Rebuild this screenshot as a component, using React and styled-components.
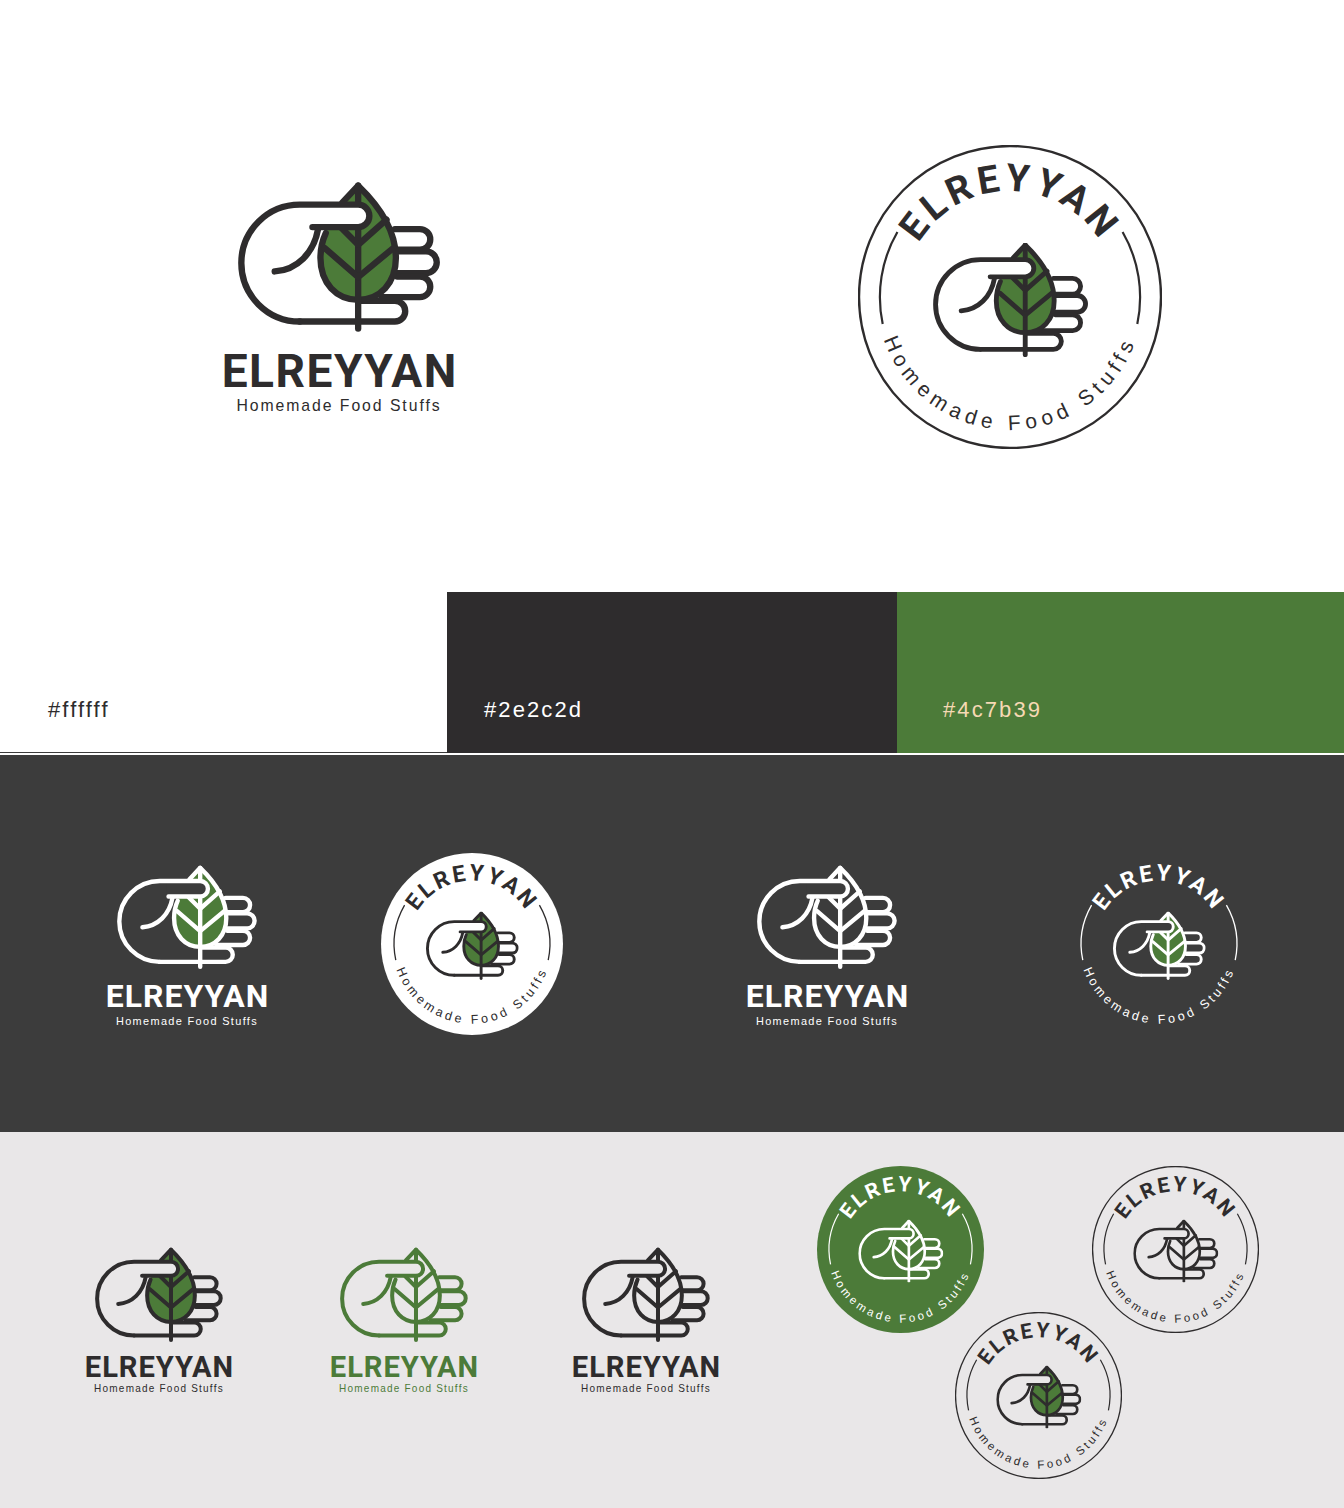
import React from "react";
import styled, { createGlobalStyle } from "styled-components";

const INK = "#2e2c2d";
const GREEN = "#4c7b39";
const DARK_BG = "#3c3c3c";
const LIGHT_BG = "#e9e7e8";

const GlobalStyle = createGlobalStyle`
  html, body {
    margin: 0;
    padding: 0;
    background: #fff;
  }
`;

const Page = styled.div`
  width: 1344px;
  height: 1508px;
  overflow: hidden;
`;

const Hero = styled.section`
  height: 592px;
  padding-top: 2px;
  box-sizing: border-box;
  display: grid;
  grid-template-columns: 678px 663px;
  justify-items: center;
  align-items: center;
  background: #fff;
`;

const Palette = styled.section`
  height: 163px;
  display: grid;
  grid-template-columns: 447px 450px 447px;
  align-items: start;
`;

const Swatch = styled.div`
  height: 161px;
  box-sizing: border-box;
  padding-left: ${(p) => p.$inset}px;
  display: flex;
  align-items: center;
  padding-top: 75px;
  background: ${(p) => p.$color};
  color: ${(p) => p.$text};
  font: 400 22px "Liberation Sans", Arial, sans-serif;
  letter-spacing: 2.1px;
  border-bottom: ${(p) => (p.$outlined ? `1px solid ${DARK_BG}` : "0")};
`;

const DarkBand = styled.section`
  height: 377px;
  background: ${DARK_BG};
  display: grid;
  grid-template-columns: 374px 196px 514px 150px 1fr;
  justify-items: center;
  align-items: center;
`;

const LightBand = styled.section`
  height: 376px;
  background: ${LIGHT_BG};
  display: grid;
  grid-template-columns: 318px 172px 312px 1fr;
  justify-items: center;
  align-items: center;
`;

const BadgeCluster = styled.div`
  justify-self: start;
  align-self: start;
  margin: 34px 0 0 15px;
  display: grid;
  grid-template-columns: 167px 167px;
  column-gap: 108px;
`;

const ClusterCentre = styled.div`
  grid-column: 1 / -1;
  justify-self: center;
  margin-top: -21px;
`;

const LockupBox = styled.div`
  font-size: ${(p) => p.$size}px;
  width: 1em;
  margin-top: ${(p) => p.$drop}px;
  display: flex;
  flex-direction: column;
  align-items: center;
  color: ${(p) => p.$color};
`;

const MarkSvg = styled.svg`
  display: block;
  width: 0.863em;
  height: auto;
  overflow: visible;
`;

const Name = styled.div`
  margin-top: 0.44em;
  font-family: Roboto, "Liberation Sans", sans-serif;
  font-weight: 700;
  font-size: 0.197em;
  line-height: 0.86em;
  letter-spacing: 0.032em;
  margin-right: -0.032em;
  white-space: nowrap;
`;

const Tagline = styled.div`
  margin-top: 0.29em;
  font-family: "Liberation Sans", Arial, sans-serif;
  font-size: 0.0675em;
  line-height: 1.3em;
  letter-spacing: 0.123em;
  white-space: nowrap;
`;

const BadgeSvg = styled.svg`
  display: block;
  width: ${(p) => p.$size}px;
  height: ${(p) => p.$size}px;
`;

const BadgeName = styled.text`
  font-family: Roboto, "Liberation Sans", sans-serif;
  font-weight: 700;
  font-size: 38px;
  letter-spacing: 4.4px;
  text-anchor: middle;
`;

const BadgeTag = styled.text`
  font-family: "Liberation Sans", Arial, sans-serif;
  font-size: 21px;
  letter-spacing: 5.5px;
  text-anchor: middle;
`;

// hand + leaf, drawn in a 605x445 box
function MarkShapes({ ink, leaf, bg }) {
  const line = { fill: "none", stroke: ink, strokeWidth: 19, strokeLinecap: "round", strokeLinejoin: "round" };
  return (
    <>
      <path
        d="M445 48 C520 120 558 190 558 265 C558 340 510 390 445 390 C380 390 332 340 332 265 C332 235 340 205 350 180 L400 100 Z"
        fill={leaf || "none"}
      />
      <path {...line} d="M270 455 L555 455 A30 30 0 0 0 555 393 L445 393" />
      <path {...line} d="M555 178 L630 178 A30 30 0 0 1 630 240 L562 240" />
      <path {...line} d="M562 245 L648 245 A32 32 0 0 1 648 310 L562 310" />
      <path {...line} d="M562 320 L630 320 A31 31 0 0 1 630 382 L515 382" />
      <path
        {...line}
        d="M398 98 L445 48 C520 120 558 190 558 265 C558 340 510 390 445 390 C380 390 332 340 332 265 C332 235 338 212 348 190"
      />
      <path {...line} d="M445 48 L445 476" />
      <path {...line} d="M345 235 L445 322 L550 235" />
      <path {...line} d="M395 175 L445 225 L530 150" />
      <path d="M445 172 A33.5 33.5 0 0 0 445 105 L300 105 L300 172 Z" fill={bg} />
      <path {...line} d="M308 172 L445 172 A33.5 33.5 0 0 0 445 105 L270 105 A175 175 0 0 0 270 455" />
      <path {...line} d="M325 178 C312 250 262 300 195 305" />
    </>
  );
}

function Lockup({ size, drop, ink, leaf, bg }) {
  return (
    <LockupBox $size={size} $drop={drop} $color={ink}>
      <MarkSvg viewBox="85 40 605 445">
        <MarkShapes ink={ink} leaf={leaf} bg={bg} />
      </MarkSvg>
      <Name>ELREYYAN</Name>
      <Tagline>Homemade Food Stuffs</Tagline>
    </LockupBox>
  );
}

function Badge({ id, size, ink, leaf, bg, fill, ring }) {
  return (
    <BadgeSvg viewBox="0 0 304 304" $size={size}>
      <defs>
        <path id={`${id}-top`} d="M46 152 A106 106 0 0 1 258 152" />
        <path id={`${id}-bottom`} d="M19 152 A133 133 0 0 0 285 152" />
      </defs>
      {fill && <circle cx="152" cy="152" r="152" fill={fill} />}
      {ring && <circle cx="152" cy="152" r="151" fill="none" stroke={ink} strokeWidth="2.4" />}
      <g fill="none" stroke={ink} strokeWidth="2.2">
        <path d="M39.4 87 A130 130 0 0 0 24.7 179" />
        <path d="M264.6 87 A130 130 0 0 1 279.3 179" />
      </g>
      <svg x="75" y="98" width="155" height="114" viewBox="85 40 605 445">
        <MarkShapes ink={ink} leaf={leaf} bg={bg} />
      </svg>
      <BadgeName fill={ink}>
        <textPath href={`#${id}-top`} startOffset="50%">ELREYYAN</textPath>
      </BadgeName>
      <BadgeTag fill={ink}>
        <textPath href={`#${id}-bottom`} startOffset="50%">Homemade Food Stuffs</textPath>
      </BadgeTag>
    </BadgeSvg>
  );
}

export default function App() {
  return (
    <Page>
      <GlobalStyle />
      <Hero>
        <Lockup size={234} drop={6} ink={INK} leaf={GREEN} bg="#fff" />
        <Badge id="hero" size={304} ink={INK} leaf={GREEN} bg="#fff" ring />
      </Hero>
      <Palette>
        <Swatch $color="#fff" $text={INK} $inset={48} $outlined>#ffffff</Swatch>
        <Swatch $color={INK} $text="#fff" $inset={37}>#2e2c2d</Swatch>
        <Swatch $color={GREEN} $text="#f6d9b4" $inset={46}>#4c7b39</Swatch>
      </Palette>
      <DarkBand>
        <Lockup size={162} drop={7} ink="#fff" leaf={GREEN} bg={DARK_BG} />
        <Badge id="solid" size={182} ink={INK} leaf={GREEN} bg="#fff" fill="#fff" />
        <Lockup size={162} drop={7} ink="#fff" bg={DARK_BG} />
        <Badge id="bare" size={182} ink="#fff" leaf={GREEN} bg={DARK_BG} />
      </DarkBand>
      <LightBand>
        <Lockup size={148} drop={4} ink={INK} leaf={GREEN} bg={LIGHT_BG} />
        <Lockup size={148} drop={4} ink={GREEN} bg={LIGHT_BG} />
        <Lockup size={148} drop={4} ink={INK} bg={LIGHT_BG} />
        <BadgeCluster>
          <Badge id="green" size={167} ink="#fff" bg={GREEN} fill={GREEN} />
          <Badge id="line" size={167} ink={INK} bg={LIGHT_BG} ring />
          <ClusterCentre>
            <Badge id="mixed" size={167} ink={INK} leaf={GREEN} bg={LIGHT_BG} ring />
          </ClusterCentre>
        </BadgeCluster>
      </LightBand>
    </Page>
  );
}
